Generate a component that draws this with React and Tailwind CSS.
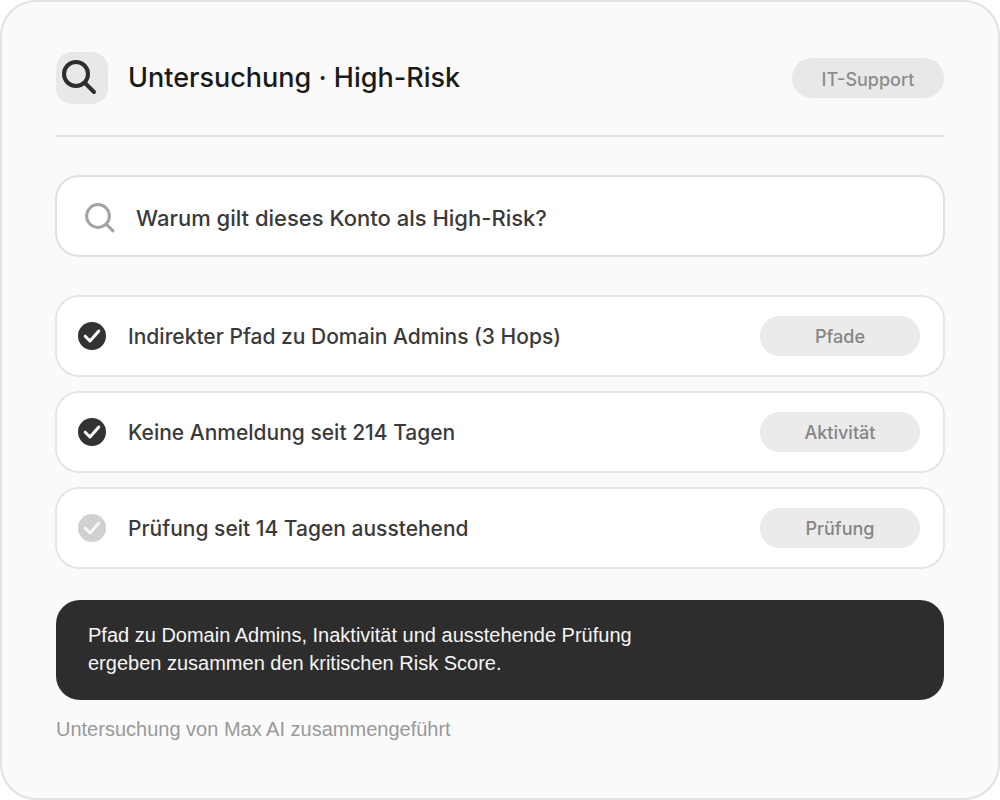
import { useState } from 'react';

const FINDINGS = [
  { text: 'Indirekter Pfad zu Domain Admins (3 Hops)', tag: 'Pfade', done: true },
  { text: 'Keine Anmeldung seit 214 Tagen', tag: 'Aktivität', done: true },
  { text: 'Prüfung seit 14 Tagen ausstehend', tag: 'Prüfung', done: false },
];

function CheckIcon({ done }) {
  return (
    <svg className="size-7 shrink-0" viewBox="0 0 28 28" fill="none" aria-hidden="true">
      <circle cx="14" cy="14" r="14" className={done ? 'fill-[#333333]' : 'fill-[#d0d0d0]'} />
      <path
        d="M7.2 14.2 L12 19 L20.8 9"
        className={done ? 'stroke-white' : 'stroke-[#f7f7f7]'}
        strokeWidth="3"
        strokeLinecap="round"
        strokeLinejoin="round"
      />
    </svg>
  );
}

function Finding({ text, tag, done }) {
  return (
    <li className="flex h-[82px] items-center rounded-3xl border-2 border-[#e6e6e6] bg-white pr-[23px] pl-[21px]">
      <CheckIcon done={done} />
      <span className="ml-[22px] flex-1 pt-0.5 text-[21px] font-medium text-[#3a3a3a]">{text}</span>
      <span className="flex h-10 w-40 items-center justify-center rounded-full bg-[#ebebeb] text-[18px] font-medium text-[#858585]">
        {tag}
      </span>
    </li>
  );
}

export default function App() {
  const [query, setQuery] = useState('Warum gilt dieses Konto als High-Risk?');

  return (
    <div className="min-h-screen bg-white font-['Inter','Liberation_Sans',sans-serif]">
      <main className="flex min-h-screen flex-col rounded-[36px] border-2 border-[#e2e2e2] bg-[#fafafa] px-[53px] pt-[50px] pb-10">
        <header className="mx-px flex items-center border-b-2 border-[#e0e0e0] pb-[31px]">
          <div className="size-[52px] shrink-0 rounded-2xl bg-[#e8e8e8]">
            <svg className="size-full" viewBox="0 0 52 52" fill="none" stroke="#2d2d2d" strokeWidth="4" strokeLinecap="round" aria-hidden="true">
              <circle cx="20" cy="22" r="12" />
              <path d="M29 31 L38 40" />
            </svg>
          </div>
          <h1 className="ml-5 flex-1 text-[27px] font-medium text-[#1a1a1a]">Untersuchung · High-Risk</h1>
          <span className="flex h-10 w-[152px] items-center justify-center rounded-full bg-[#e8e8e8] pt-0.5 text-[18px] font-medium text-[#8c8c8c]">
            IT-Support
          </span>
        </header>

        <label className="mt-[38px] flex h-[82px] items-center rounded-3xl border-2 border-[#e0e0e0] bg-white px-[27px] pt-0.5">
          <svg className="size-8 shrink-0" viewBox="0 0 32 32" fill="none" stroke="#a3a3a3" strokeWidth="3" strokeLinecap="round" aria-hidden="true">
            <circle cx="14" cy="15" r="11.4" />
            <path d="M22.4 23.4 L29 29.8" />
          </svg>
          <input
            type="text"
            aria-label="Frage"
            value={query}
            onChange={(e) => setQuery(e.target.value)}
            className="ml-5 min-w-0 flex-1 pt-0.5 text-[22px] font-medium text-[#3a3a3a] outline-none"
          />
        </label>

        <ul className="mt-[38px] flex flex-col gap-3.5">
          {FINDINGS.map((f) => (
            <Finding key={f.tag} {...f} />
          ))}
        </ul>

        <div className="mx-px mt-[31px] font-['Liberation_Sans',Arial,sans-serif] text-[20px] leading-7">
          <p className="rounded-3xl bg-[#2d2d2d] px-8 pt-[21px] pb-[23px] text-[#f5f5f5]">
            Pfad zu Domain Admins, Inaktivität und ausstehende Prüfung
            <br />
            ergeben zusammen den kritischen Risk Score.
          </p>
          <p className="mt-[15px] text-[#999999]">Untersuchung von Max AI zusammengeführt</p>
        </div>
      </main>
    </div>
  );
}
